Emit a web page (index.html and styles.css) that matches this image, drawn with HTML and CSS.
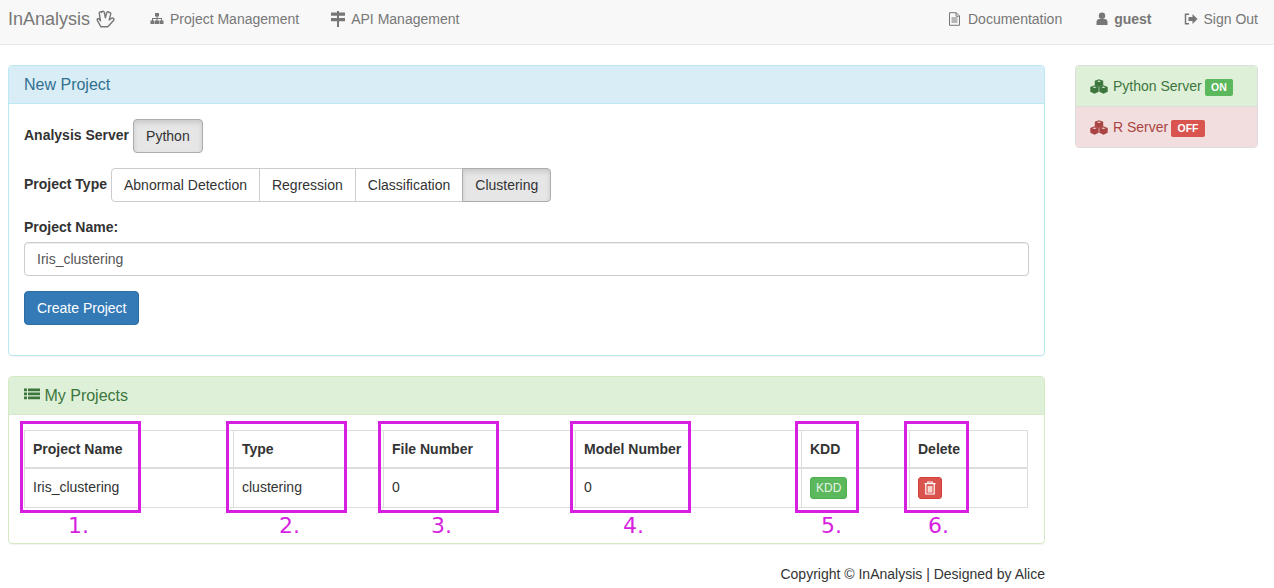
FILE: index.html
```html
<!DOCTYPE html>
<html lang="en">
<head>
    <meta charset="UTF-8">
    <title>InAnalysis</title>
    <link rel="stylesheet" href="styles.css">
</head>
<body>

<header class="navbar">
    <a class="brand">InAnalysis
        <svg class="brand-icon" width="20" height="18" viewBox="0 0 20 18"><path d="M5 16.800 1.300 10.300c-.6-1.400 1.300-2.400 2.200-1l1 1.500L3.300 3.400C3 1.800 5 1.300 5.500 2.500 5.900.8 8 .8 8.300 2.300l1.100 5.500L10.700 2.700c.4-1.300 1.900-1.200 2.300-.2 1.100-.3 2 .5 1.700 1.700L13.200 10l2.300-1.700c1.500-1 3.200.8 2 2.200l-3.900 4.200c-.7.800-1.100 1.300-1.800 2.100Z" fill="none" stroke="#777" stroke-width="1.400" stroke-linejoin="round"/></svg>
    </a>
    <ul class="nav">
        <li>
            <svg width="14" height="14" viewBox="0 0 14 14"><path d="M5 1h4v3.500H7.500V6H12v2.500h1.500V12h-4V8.500H11V7H7.500v1.500H9V12H5V8.500h1.500V7H3v1.500h1.500V12h-4V8.500H2V6h4.500V4.500H5Z" fill="#777"/></svg>
            Project Management
        </li>
        <li>
            <svg width="14" height="16" viewBox="0 0 14 16"><path d="M6 0h2v1.500h6v3.200H8V7h6v3.200H8V16H6v-5.800H0V7h6V4.700H0V1.500h6Z" fill="#777"/></svg>
            API Management
        </li>
    </ul>
    <ul class="nav nav-right">
        <li>
            <svg width="13" height="14" viewBox="0 0 13 14"><path d="M1.500.7h6.800l3.200 3.200v9.400h-10ZM8 .9v3.300h3.300M3.500 6h6M3.500 8h6M3.500 10h6" fill="none" stroke="#777"/></svg>
            Documentation
        </li>
        <li class="nav-user">
            <svg width="12" height="14" viewBox="0 0 12 14"><circle cx="6" cy="3.700" r="3.200" fill="#777"/><path d="M.5 13v-3.200C.5 8.300 1.800 7 3.500 7h5c1.700 0 3 1.300 3 2.800V13Z" fill="#777"/></svg>
            guest
        </li>
        <li>
            <svg width="14" height="12" viewBox="0 0 14 12"><path d="M5 1.200H1.500v9.600H5" fill="none" stroke="#777" stroke-width="1.500"/><path d="M4.500 4h4V1l5 5-5 5V8h-4Z" fill="#777"/></svg>
            Sign Out
        </li>
    </ul>
</header>

<div class="page">
    <main class="content">
        <section class="panel panel-info">
            <div class="panel-heading">New Project</div>
            <div class="panel-body">
                <div class="form-row">
                    <b>Analysis Server</b>
                    <span class="btn btn-default active">Python</span>
                </div>
                <div class="form-row form-row-type">
                    <b>Project Type</b>
                    <div class="btn-group">
                        <span class="btn btn-default">Abnormal Detection</span>
                        <span class="btn btn-default">Regression</span>
                        <span class="btn btn-default">Classification</span>
                        <span class="btn btn-default active">Clustering</span>
                    </div>
                </div>
                <label class="field-label">Project Name:</label>
                <input class="form-control" type="text" value="Iris_clustering">
                <span class="btn btn-primary">Create Project</span>
            </div>
        </section>

        <section class="panel panel-success">
            <div class="panel-heading">
                <svg width="16" height="13" viewBox="0 0 16 13"><path d="M0 .5h3v2.800H0ZM4 .5h12v2.800H4ZM0 4.500h3v2.800H0ZM4 4.500h12v2.800H4ZM0 8.500h3v2.800H0ZM4 8.500h12v2.800H4Z" fill="#3c763d"/></svg>
                My Projects
            </div>
            <div class="panel-body panel-body-table">
                <table>
                    <thead>
                        <tr>
                            <th class="col-name">Project Name</th>
                            <th class="col-type">Type</th>
                            <th class="col-file">File Number</th>
                            <th class="col-model">Model Number</th>
                            <th class="col-kdd">KDD</th>
                            <th>Delete</th>
                        </tr>
                    </thead>
                    <tbody>
                        <tr>
                            <td>Iris_clustering</td>
                            <td>clustering</td>
                            <td>0</td>
                            <td>0</td>
                            <td><span class="btn btn-xs btn-success">KDD</span></td>
                            <td>
                                <span class="btn btn-xs btn-danger">
                                    <svg width="12" height="14" viewBox="0 0 12 14"><path d="M.5 2.700h11M3.800 2.500V1h4.400v1.500M1.800 3v10h8.400V3" fill="none" stroke="#fff" stroke-width="1.200"/><path d="M3.500 5h5v6.500h-5Z" fill="#f4b5a8"/><path d="M4.700 5v6.500M6 5v6.500M7.300 5v6.500" stroke="#fff" stroke-width=".6"/></svg>
                                </span>
                            </td>
                        </tr>
                    </tbody>
                </table>
                <!-- numbered marks drawn over the table -->
                <div class="mark mark-1"><span>1.</span></div>
                <div class="mark mark-2"><span>2.</span></div>
                <div class="mark mark-3"><span>3.</span></div>
                <div class="mark mark-4"><span>4.</span></div>
                <div class="mark mark-5"><span>5.</span></div>
                <div class="mark mark-6"><span>6.</span></div>
            </div>
        </section>

        <footer>Copyright © InAnalysis | Designed by Alice</footer>
    </main>

    <aside class="servers">
        <div class="server server-on">
            <svg width="18" height="15" viewBox="0 0 18 15"><path d="M9 .2 13.200 1.800v4.500L9 8 4.800 6.300V1.800ZM4.500 6.300l4.200 1.600v4.800l-4.200 2-4.200-2V7.900ZM13.500 6.300l4.200 1.600v4.800l-4.200 2-4.200-2V7.900Z" fill="currentColor"/><path d="M9 1.400 11 2.200 9 3 7 2.200ZM4.500 7.500 6.500 8.300 4.500 9.100 2.500 8.300ZM13.500 7.500l2 .8-2 .8-2-.8Z" fill="#dff0d8"/></svg>
            <span>Python Server</span>
            <span class="label label-on">ON</span>
        </div>
        <div class="server server-off">
            <svg width="18" height="15" viewBox="0 0 18 15"><path d="M9 .2 13.200 1.800v4.500L9 8 4.800 6.300V1.800ZM4.500 6.300l4.200 1.600v4.800l-4.200 2-4.200-2V7.900ZM13.500 6.300l4.200 1.600v4.800l-4.200 2-4.200-2V7.900Z" fill="currentColor"/><path d="M9 1.400 11 2.200 9 3 7 2.200ZM4.500 7.500 6.500 8.300 4.500 9.100 2.500 8.300ZM13.500 7.500l2 .8-2 .8-2-.8Z" fill="#f2dede"/></svg>
            <span>R Server</span>
            <span class="label label-off">OFF</span>
        </div>
    </aside>
</div>

</body>
</html>
```

FILE: styles.css
```css
* {
    box-sizing: border-box;
}
body {
    margin: 0;
    font-family: "Liberation Sans", Arial, sans-serif;
    font-size: 14px;
    line-height: 20px;
    color: #333;
    background-color: #fff;
}
.navbar {
    display: flex;
    align-items: center;
    height: 45px;
    padding: 0 16px 6px 8px;
    background-color: #f8f8f8;
    border-bottom: 1px solid #e7e7e7;
    color: #777;
}
.brand {
    display: flex;
    align-items: center;
    gap: 6px;
    font-size: 18px;
    width: 142px;
}
.nav {
    display: flex;
    gap: 32px;
    list-style-type: none;
    margin: 0;
    padding: 0;
}
.nav li {
    display: flex;
    align-items: center;
    gap: 6px;
}
.nav-right {
    margin-left: auto;
}
.nav-right li:first-child {
    gap: 7px;
    margin-right: 2px;
}
.nav-user {
    font-weight: bold;
}
.page {
    display: flex;
    gap: 30px;
    padding: 20px 15px 0 8px;
}
.content {
    width: 1037px;
}
.panel {
    border: 1px solid;
    border-radius: 4px;
    margin-bottom: 20px;
    box-shadow: 0 1px 1px rgba(0, 0, 0, 0.05);
}
.panel-heading {
    height: 38px;
    padding: 9px 15px;
    font-size: 16px;
    line-height: 20px;
    border-bottom: 1px solid;
    border-radius: 3px 3px 0 0;
}
.panel-info {
    border-color: #bce8f1;
}
.panel-info .panel-heading {
    color: #31708f;
    background-color: #d9edf7;
    border-color: #bce8f1;
}
.panel-success {
    border-color: #d6e9c6;
}
.panel-success .panel-heading {
    color: #3c763d;
    background-color: #dff0d8;
    border-color: #d6e9c6;
}
.panel-body {
    padding: 15px;
    height: 251px;
}
.panel-body-table {
    position: relative;
    height: 128px;
}
.form-row {
    display: flex;
    align-items: flex-start;
    gap: 4px;
    height: 34px;
}
.form-row b {
    line-height: 32px;
}
.form-row-type {
    margin-top: 15px;
}
.field-label {
    display: block;
    font-weight: bold;
    margin-top: 15px;
    margin-bottom: 5px;
}
.btn {
    display: inline-block;
    padding: 6px 12px;
    border: 1px solid;
    border-radius: 4px;
    line-height: 20px;
    white-space: nowrap;
}
.btn-default {
    color: #333;
    background-color: #fff;
    border-color: #ccc;
}
.btn-default.active {
    background-color: #e6e6e6;
    border-color: #adadad;
    box-shadow: inset 0 3px 5px rgba(0, 0, 0, 0.125);
}
.btn-primary {
    color: #fff;
    background-color: #337ab7;
    border-color: #2e6da4;
}
.btn-xs {
    padding: 1px 5px;
    font-size: 12px;
    line-height: 18px;
    border-radius: 3px;
    height: 22px;
    vertical-align: top;
}
.btn-success {
    color: #e6f4e6;
    background-color: #5cb85c;
    border-color: #4cae4c;
}
.btn-danger {
    padding: 2px 5px;
    color: #fff;
    background-color: #d9534f;
    border-color: #d43f3a;
}
.btn-danger svg {
    display: block;
    margin-top: 1px;
}
.btn-group {
    display: flex;
}
.btn-group .btn {
    border-radius: 0;
    margin-left: -1px;
}
.btn-group .btn:first-child {
    margin-left: 0;
    border-radius: 4px 0 0 4px;
}
.btn-group .btn:last-child {
    border-radius: 0 4px 4px 0;
}
.form-control {
    display: block;
    width: 100%;
    height: 34px;
    padding: 6px 12px;
    margin-bottom: 15px;
    font: inherit;
    color: #555;
    border: 1px solid #ccc;
    border-radius: 4px;
    box-shadow: inset 0 1px 1px rgba(0, 0, 0, 0.075);
}
table {
    width: 1004px;
    border-collapse: collapse;
    table-layout: fixed;
}
th, td {
    padding: 8px;
    text-align: left;
    vertical-align: top;
    border: 1px solid #ddd;
}
th {
    border-bottom-width: 2px;
}
.col-name { width: 209px; }
.col-type { width: 150px; }
.col-file { width: 192px; }
.col-model { width: 226px; }
.col-kdd { width: 108px; }
.mark {
    position: absolute;
    border: 3px solid #d61fe0;
}
.mark span {
    position: absolute;
    top: 100%;
    margin-top: 4px;
    font-family: "DejaVu Sans", sans-serif;
    font-size: 22px;
    line-height: 24px;
    color: #d61fe0;
}
.mark-1 { left: 11px; top: 6px; width: 121px; height: 92px; }
.mark-2 { left: 217px; top: 6px; width: 121px; height: 92px; }
.mark-3 { left: 369px; top: 6px; width: 121px; height: 92px; }
.mark-4 { left: 561px; top: 6px; width: 121px; height: 92px; }
.mark-5 { left: 786px; top: 6px; width: 64px; height: 92px; }
.mark-6 { left: 895px; top: 6px; width: 65px; height: 92px; }
.mark-1 span { left: 45px; }
.mark-2 span { left: 50px; }
.mark-3 span { left: 50px; }
.mark-4 span { left: 50px; }
.mark-5 span { left: 23px; }
.mark-6 span { left: 21px; }
footer {
    text-align: right;
}
.servers {
    width: 183px;
    height: 83px;
    border: 1px solid #ddd;
    border-radius: 4px;
}
.server {
    display: flex;
    align-items: center;
    gap: 4px;
    height: 41px;
    padding-left: 14px;
}
.server svg {
    margin-right: 1px;
}
.server-on {
    color: #3c763d;
    background-color: #dff0d8;
    border-bottom: 1px solid #ddd;
}
.server-off {
    height: 40px;
    color: #a94442;
    background-color: #f2dede;
}
.label {
    margin-left: -1px;
    margin-top: 2px;
    padding: 2px 6.300px;
    font-size: 10.500px;
    line-height: 13px;
    font-weight: bold;
    color: #fff;
    border-radius: 2px;
}
.label-on {
    background-color: #5cb85c;
}
.label-off {
    background-color: #d9534f;
}
```
